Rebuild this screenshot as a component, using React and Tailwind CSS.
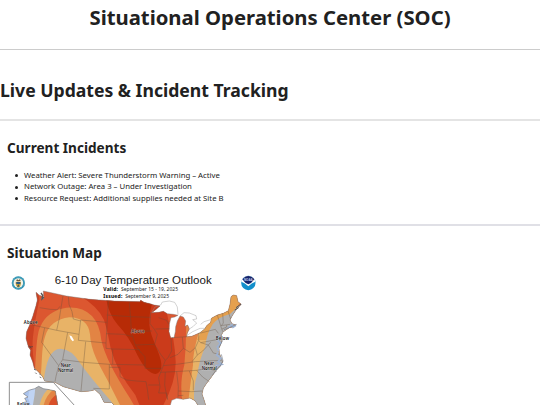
import React from 'react';

const incidents = [
  'Weather Alert: Severe Thunderstorm Warning – Active',
  'Network Outage: Area 3 – Under Investigation',
  'Resource Request: Additional supplies needed at Site B',
];

const land =
  'M108 82L117 90L127 94L125 103L131 101L130 78Q200 96 270 103T420 110L422 106L432 112L450 116L462 120L480 123L467 134L455 143L476 142L490 139L502 146L520 148L534 151L524 156L513 158L508 178L507 200L512 218L522 218L526 200L527 185L532 168L540 153L550 156L557 168L555 184L563 180L568 192L562 204L560 215L575 214L600 203L614 192L620 182L632 172L634 160L652 150L670 145L685 137L690 118L693 95L700 90L710 92L714 110L724 118L710 132L698 150L690 165L696 176L708 180L703 185L688 188L670 200L662 214L665 230L657 250L658 265L668 290L662 302L648 315L635 335L620 355L610 370L606 387L612 404L618 424L596 424L585 407L570 399L550 403L530 400L515 406L510 424L346 424L335 413L312 412L300 388L285 374L270 378L243 380L190 365L165 352L134 348L128 335L115 320L103 310L98 290L90 270L92 256L85 245L78 220L80 200L88 182L98 155L108 122L112 105Z';

const alaska = 'M70 386L86 376L104 371L116 364L130 371L148 374L166 378L174 424L60 424L66 414L80 410L74 400L84 396Z';

const stateLines = [
  'M119 128L150 133L172 134L180 124',
  'M98 180L134 188L170 196L237 208',
  'M189 92L178 160L170 196',
  'M205 95L207 118L216 140L220 162L242 168',
  'M242 165L235 226L318 234L325 108',
  'M242 165L320 172M320 150L390 155L452 157',
  'M134 188L125 232L176 302L168 334L165 350',
  'M203 202L188 284L251 292L257 230',
  'M188 284L176 302M251 292L243 378',
  'M251 292L328 298L338 298L338 252L318 250V234',
  'M338 252L420 254M338 298L435 300M328 298V372L280 370',
  'M318 206L370 208L398 215L406 240L424 264L435 275V310',
  'M328 307H360V335L380 345L410 348L438 350',
  'M388 112L392 160L394 205L398 215',
  'M393 199L456 198M406 240L462 238L470 248',
  'M452 142L450 176L464 194L472 208L464 238',
  'M470 248L482 268L496 286L490 302L476 338L480 366',
  'M435 310H486M438 350L442 372L446 404',
  'M445 360H478M480 366L476 384H500L503 404',
  'M476 158L500 166L506 178M467 192L508 191',
  'M513 220L515 258L504 278L496 286',
  'M516 218L545 216L561 215',
  'M547 216L550 250L534 268L510 278',
  'M550 250L570 262L586 248L596 226V204',
  'M490 302L530 298L586 290L665 286',
  'M480 322L540 319L590 316L622 310L650 319',
  'M496 321L494 360L502 403',
  'M530 320L535 365L534 398M568 318L580 348V376',
  'M535 378L575 380L607 378M534 392L550 391',
  'M590 316L608 336L628 350',
  'M586 248L592 270L576 290M592 270L608 258L625 240L632 232',
  'M596 226L602 233L650 224L660 226M598 205L646 193L655 205',
  'M602 233L625 240L640 264L658 268',
  'M652 150L662 182L668 200M668 145L670 174L664 182',
  'M684 138L692 162M662 182L690 178M666 192L680 186V180',
];

function TemperatureMap() {
  return (
    <svg
      className="block h-[140px] w-[270px]"
      viewBox="0 0 810 420"
      role="img"
      aria-label="6-10 Day Temperature Outlook"
    >
      <defs>
        <clipPath id="land">
          <path d={land} />
        </clipPath>
        <clipPath id="alaska">
          <path d={alaska} />
        </clipPath>
      </defs>

      {/* lower 48, one shape per probability band */}
      <g clipPath="url(#land)">
        <path d="M60 60H740V424H60Z" fill="#dc5730" />
        <path d="M60 60H112L118 105Q104 170 99 215T107 318L60 330Z" fill="#cb4122" />
        <path d="M236 90Q295 125 312 165Q322 195 332 250Q350 320 406 390L420 424H488Q528 350 527 290Q524 220 505 165L490 90Z" fill="#cb3b1b" />
        <path d="M318 100Q325 145 352 178Q388 216 412 270Q440 325 466 327Q490 322 482 285C474 250 452 218 448 180Q445 145 462 100Z" fill="#b72b06" />
        <path d="M104 325C108 290 107 235 116 198Q132 145 185 131Q240 119 276 153Q299 178 304 225Q316 285 390 400L404 424H320L110 345Z" fill="#e28444" />
        <path d="M120 345C128 305 122 250 136 212Q152 164 208 157Q264 158 270 208C272 258 298 300 325 350L362 424H310Z" fill="#e8b367" />
        <path d="M131 352Q140 252 181 251Q215 252 240 294Q275 342 330 405L345 424H120Z" fill="#b0b0b0" />
        <path d="M558 150Q560 230 553 300Q537 355 549 424H740V60H660Z" fill="#e28444" />
        <path d="M600 190Q578 260 579 300Q572 350 563 424H740V190Z" fill="#e8b367" />
        <path d="M590 225L634 150L690 80L730 90L700 150L650 190L620 225Z" fill="#e5a04e" />
        <path d="M730 112Q704 133 690 147Q656 155 638 178Q618 210 616 245Q597 285 593 325Q577 370 584 424H760Z" fill="#b0b0b0" />
      </g>
      <path d="M208 211L215 214L222 226L218 229L212 222Z" fill="#fff" />
      <path d={land} fill="none" stroke="#777" strokeWidth="1.3" />
      <g fill="none" stroke="#63503f" strokeWidth="1.6" opacity="0.65">
        {stateLines.map((d, i) => (
          <path key={i} d={d} />
        ))}
      </g>
      <path d="M123 84L128 91L126 102L132 97" fill="none" stroke="#555" strokeWidth="4" />
      <path d="M87 242L94 250M86 246L99 245" fill="none" stroke="#444" strokeWidth="2" />
      <path d="M102 313L108 315M106 323L110 327M118 327L122 329M119 336L124 338" stroke="#777" strokeWidth="3" />

      {/* great lakes shoreline */}
      <g fill="none" stroke="#999" strokeWidth="1.3">
        <path d="M455 142L465 126L482 120L487 111L508 108L524 112L532 126L534 149" />
        <path d="M540 153L552 143L568 144L588 152L590 162L578 164L590 174L580 184L568 192" />
        <path d="M560 212L578 200L600 190L614 190M602 178L612 170L632 164" />
      </g>
      <path d="M708 128L723 117M704 135L716 128" stroke="#555" strokeWidth="3" />
      <path
        d="M684 188L696 180L699 187L708 181M657 213L654 228L662 234L652 246L656 258M654 262L650 270L663 280L654 290L666 298L648 302L652 308"
        fill="none"
        stroke="#9eb2d2"
        strokeWidth="5"
      />
      <path d="M672 194L690 187L710 178M664 210L668 226L658 246M664 268L669 288L660 304L638 330" fill="none" stroke="#6d7787" strokeWidth="1.8" />

      {/* alaska inset */}
      <path d="M28 424V352H160L226 424" fill="none" stroke="#777" strokeWidth="2.5" />
      <g clipPath="url(#alaska)">
        <path d="M50 350H190V424H50Z" fill="#a9c2ec" />
        <path d="M92 350L84 400L94 424H190V350Z" fill="#c0d4f4" />
        <path d="M107 350Q106 385 98 424H190V350Z" fill="#b0b0b0" />
        <path d="M155 364Q125 384 118 424H190V364Z" fill="#e8b367" />
        <path d="M166 370Q137 390 130 424H190V370Z" fill="#e28444" />
        <path d="M180 382Q150 398 145 424H190Z" fill="#d95029" />
      </g>
      <path d={alaska} fill="none" stroke="#777" strokeWidth="1.8" />

      {/* labels */}
      <g className="font-['Noto_Sans',sans-serif] font-semibold" fontSize="13" textAnchor="middle" fill="#111" stroke="#fff" strokeOpacity="0.55" strokeWidth="2" paintOrder="stroke">
        <text x="92" y="178" textLength="41">Above</text>
        <text x="414" y="203" textLength="40" fill="#4a1a10">Above</text>
        <text x="197" y="307" textLength="30">Near</text>
        <text x="197" y="322" textLength="46">Normal</text>
        <text x="667" y="224" textLength="40">Below</text>
        <text x="627" y="301" textLength="30">Near</text>
        <text x="628" y="315" textLength="46">Normal</text>
        <text x="70" y="420" textLength="38" fontSize="11">Below</text>
      </g>
      <text x="164" y="57" fontSize="35" textLength="471" lengthAdjust="spacingAndGlyphs" fill="#161616" className="font-['Liberation_Sans',sans-serif]">
        6-10 Day Temperature Outlook
      </text>
      <g fontSize="15" fill="#222" className="font-['Noto_Sans',sans-serif]">
        <text x="310" y="79" textLength="44" className="font-bold" fill="#000">Valid:</text>
        <text x="363" y="79" textLength="171">September 15 - 19, 2025</text>
        <text x="310" y="98" textLength="57" className="font-bold" fill="#000">Issued:</text>
        <text x="376" y="98" textLength="131">September 9, 2025</text>
      </g>

      {/* commerce seal */}
      <circle cx="55" cy="54" r="20" fill="#278cac" />
      <circle cx="55" cy="54" r="17.5" fill="none" stroke="#8fd0e2" strokeWidth="2" strokeDasharray="2 2" />
      <circle cx="55" cy="54" r="14.5" fill="#f5f3e4" />
      <path d="M47 50H63V56Q62 65 55 68Q48 65 47 56Z" fill="#c9a13b" />
      <path d="M49 51H61V57H49Z" fill="#285d86" />
      <path d="M55 58L59 65H51Z" fill="#3b5a58" />
      <path d="M48 46L52 43L55 46L59 43L63 46L58 49H52Z" fill="#6e5a35" />

      {/* noaa seal */}
      <circle cx="745" cy="54" r="21.5" fill="#138fcb" />
      <path d="M724 50A21.500 21.500 0 0 1 766 50Q755 53 745 64Q735 54 724 50Z" fill="#fff" />
      <path d="M727 43A21.500 21.500 0 0 1 763 43Q757 50 753 54L745 58L737 54Q732 49 727 43Z" fill="#14246b" />
      <text x="745" y="48" fontSize="9" textAnchor="middle" fill="#c5d0ee" className="font-['Liberation_Sans',sans-serif] font-bold">NOAA</text>
    </svg>
  );
}

function App() {
  return (
    <div className="h-[405px] overflow-hidden bg-white font-['Noto_Sans',sans-serif] text-[#212121]">
      <h1 className="h-[49px] pt-[3px] text-center text-[20.3px] leading-7 font-bold">
        Situational Operations Center (SOC)
      </h1>
      <hr className="border-[#ccc]" />

      <h2 className="h-[69px] pt-7 text-[17.6px] leading-6 font-bold">
        Live Updates &amp; Incident Tracking
      </h2>
      <hr className="border-t-2 border-[#e4e4e4]" />

      <section className="h-[103px] px-[7px] pt-[17px]">
        <h3 className="text-[13.6px] leading-5 font-bold">Current Incidents</h3>
        <ul className="mt-[11.6px] text-[7.75px] leading-[11.7px]">
          {incidents.map((item) => (
            <li key={item} className="flex items-center pl-[8px]">
              <span className="mr-[6px] size-[3px] rounded-full bg-[#212121]" />
              {item}
            </li>
          ))}
        </ul>
      </section>
      <hr className="border-t-2 border-[#e0e0e6]" />

      <section>
        <h3 className="h-[39px] px-[7px] pt-[17px] text-[13.6px] leading-5 font-bold">Situation Map</h3>
        <TemperatureMap />
      </section>
    </div>
  );
}

export default App;
